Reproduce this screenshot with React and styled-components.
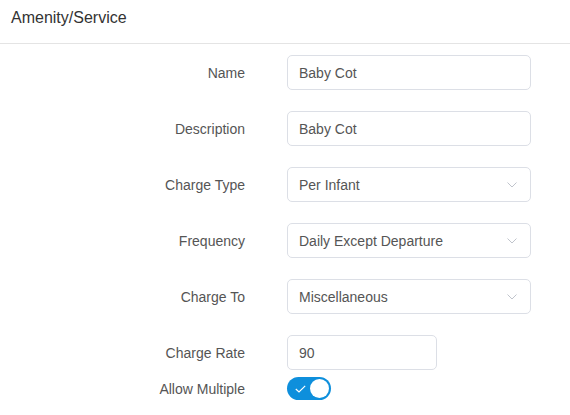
import React from "react";
import styled, { createGlobalStyle } from "styled-components";

const GlobalStyle = createGlobalStyle`
  body {
    margin: 0;
    background: #fff;
    font-family: "Liberation Sans", Arial, sans-serif;
  }
`;

const Panel = styled.div`
  width: 570px;
  height: 415px;
  overflow: hidden;
`;

const Header = styled.div`
  height: 44px;
  display: flex;
  align-items: center;
  padding: 0 11px 8px;
  box-sizing: border-box;
  border-bottom: 1px solid #e4e4e4;
  font-size: 16px;
  color: #333;
`;

const Form = styled.div`
  display: flex;
  flex-direction: column;
  padding-top: 11px;
`;

const Row = styled.div`
  display: flex;
  align-items: center;
  margin-bottom: ${(p) => p.$gap}px;
`;

const Label = styled.div`
  width: 245px;
  text-align: right;
  font-size: 14px;
  color: #555;
  margin-right: 42px;
`;

const Field = styled.div`
  width: ${(p) => p.$width}px;
  height: 35px;
  box-sizing: border-box;
  border: 1px solid #dcdfe6;
  border-radius: 5px;
  display: flex;
  align-items: center;
  justify-content: space-between;
  padding: 0 12px 0 11px;
  font-size: 14px;
  color: #555;
`;

const Chevron = styled.svg`
  width: 10px;
  height: 6px;
  margin-right: 1px;
`;

const Switch = styled.div`
  width: 44px;
  height: 23px;
  border-radius: 12px;
  background: #0e8fdc;
  display: flex;
  align-items: center;
  justify-content: space-between;
  padding: 0 2px 0 8px;
  box-sizing: border-box;
`;

const Knob = styled.div`
  width: 19px;
  height: 19px;
  border-radius: 50%;
  background: #fff;
`;

const ChevronIcon = () => (
  <Chevron viewBox="0 0 10 6">
    <path d="M0.5 0.5 L5 5 L9.5 0.5" fill="none" stroke="#c0c4cc" strokeWidth="1" />
  </Chevron>
);

const rows = [
  { label: "Name", value: "Baby Cot" },
  { label: "Description", value: "Baby Cot" },
  { label: "Charge Type", value: "Per Infant", select: true },
  { label: "Frequency", value: "Daily Except Departure", select: true },
  { label: "Charge To", value: "Miscellaneous", select: true },
];

const App = () => {
  return (
    <Panel>
      <GlobalStyle />
      <Header>Amenity/Service</Header>
      <Form>
        {rows.map((r) => (
          <Row key={r.label} $gap={21}>
            <Label>{r.label}</Label>
            <Field $width={244}>
              <span>{r.value}</span>
              {r.select && <ChevronIcon />}
            </Field>
          </Row>
        ))}
        <Row $gap={7}>
          <Label>Charge Rate</Label>
          <Field $width={150}>
            <span>90</span>
          </Field>
        </Row>
        <Row $gap={0}>
          <Label>Allow Multiple</Label>
          <Switch>
            <svg width="11" height="8" viewBox="0 0 11 8">
              <path d="M0.8 4 L4 7 L10.2 0.8" fill="none" stroke="#fff" strokeWidth="1.2" />
            </svg>
            <Knob />
          </Switch>
        </Row>
      </Form>
    </Panel>
  );
};

export default App;
